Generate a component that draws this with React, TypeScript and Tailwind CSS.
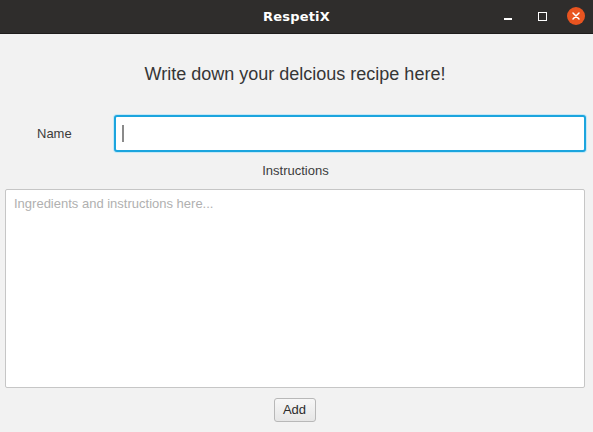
import React from "react";

export default function App() {
  return (
    <div className="w-[593px] h-[432px] bg-[#f2f2f2] flex flex-col overflow-hidden" style={{ fontFamily: '"Liberation Sans", Arial, sans-serif' }}>
      {/* Title bar */}
      <div className="h-[34px] bg-[#2f2d2c] border-b border-[#1e1d1c] flex items-center relative shrink-0">
        <div className="flex-1 text-center text-white font-bold text-[13px] tracking-[0.2px]" style={{ fontFamily: '"DejaVu Sans", sans-serif' }}>
          RespetiX
        </div>
        <div className="absolute right-0 top-0 h-[33px] flex items-center">
          <div className="w-[8px] h-[1.5px] bg-white mr-[26px] mt-[5px]" />
          <div className="w-[9px] h-[9px] border border-white mr-[20px] mb-[1px]" />
          <div className="w-[18px] h-[18px] rounded-full bg-[#e95420] mr-[8px] mb-[1px] flex items-center justify-center">
            <svg width="10" height="10" viewBox="0 0 10 10">
              <path d="M2 2 L8 8 M8 2 L2 8" stroke="white" strokeWidth="1.5" strokeLinecap="round" />
            </svg>
          </div>
        </div>
      </div>

      {/* Body */}
      <div className="flex flex-col flex-1">
        <div className="mt-[30px] text-center text-[18px] leading-[21px] text-[#363636] pr-[3px]">
          Write down your delcious recipe here!
        </div>

        <div className="mt-[30px] flex items-center">
          <div className="w-[114px] pl-[37px] text-[13px] text-[#3c3c3c]">Name</div>
          <div className="w-[472px] h-[37px] bg-white border-2 border-[#1ca5de] rounded-[3px] shadow-[0_0_0_1px_#c6e8f6] flex items-center pl-[6px]">
            <div className="w-[2px] h-[17px] bg-[#8a8a8a]" />
          </div>
        </div>

        <div className="mt-[11px] text-center text-[13px] leading-[15px] text-[#3c3c3c] pr-[2px]">Instructions</div>

        <div className="mt-[11px] ml-[5px] w-[580px] h-[199px] bg-white border border-[#c6c6c6] rounded-[2px] pt-[4px] pl-[8px] text-[13px] text-[#b0b0b0]">
          Ingredients and instructions here...
        </div>

        <div className="mt-[10px] flex justify-center pr-[4px]">
          <div className="w-[42px] h-[24px] border border-[#b8b8b8] rounded-[3px] bg-gradient-to-b from-[#f7f7f7] to-[#e6e6e6] flex items-center justify-center text-[13px] text-[#2c2c2c]">
            Add
          </div>
        </div>
      </div>
    </div>
  );
}
